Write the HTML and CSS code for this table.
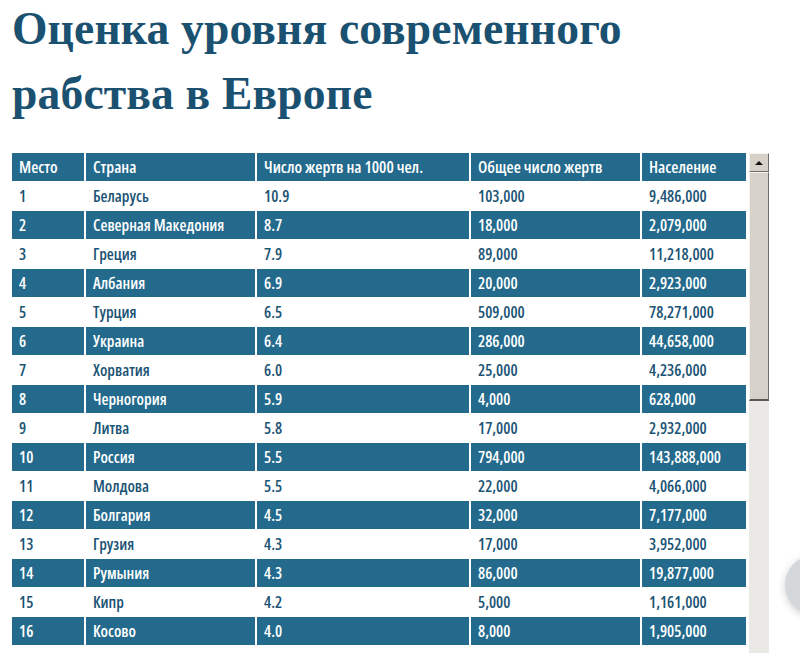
FILE: index.html
```html
<!DOCTYPE html>
<html lang="ru">
<head>
<meta charset="utf-8">
<title>Оценка уровня современного рабства в Европе</title>
<link rel="stylesheet" href="styles.css">
</head>
<body>
<h1 class="title">Оценка уровня современного рабства в Европе</h1>
<div class="frame">
  <table class="data">
    <colgroup><col class="c1"><col class="c2"><col class="c3"><col class="c4"><col class="c5"></colgroup>
    <thead>
      <tr><th>Место</th><th>Страна</th><th>Число жертв на 1000 чел.</th><th>Общее число жертв</th><th>Население</th></tr>
    </thead>
    <tbody>
      <tr><td>1</td><td>Беларусь</td><td>10.9</td><td>103,000</td><td>9,486,000</td></tr>
      <tr class="dark"><td>2</td><td>Северная Македония</td><td>8.7</td><td>18,000</td><td>2,079,000</td></tr>
      <tr><td>3</td><td>Греция</td><td>7.9</td><td>89,000</td><td>11,218,000</td></tr>
      <tr class="dark"><td>4</td><td>Албания</td><td>6.9</td><td>20,000</td><td>2,923,000</td></tr>
      <tr><td>5</td><td>Турция</td><td>6.5</td><td>509,000</td><td>78,271,000</td></tr>
      <tr class="dark"><td>6</td><td>Украина</td><td>6.4</td><td>286,000</td><td>44,658,000</td></tr>
      <tr><td>7</td><td>Хорватия</td><td>6.0</td><td>25,000</td><td>4,236,000</td></tr>
      <tr class="dark"><td>8</td><td>Черногория</td><td>5.9</td><td>4,000</td><td>628,000</td></tr>
      <tr><td>9</td><td>Литва</td><td>5.8</td><td>17,000</td><td>2,932,000</td></tr>
      <tr class="dark"><td>10</td><td>Россия</td><td>5.5</td><td>794,000</td><td>143,888,000</td></tr>
      <tr><td>11</td><td>Молдова</td><td>5.5</td><td>22,000</td><td>4,066,000</td></tr>
      <tr class="dark"><td>12</td><td>Болгария</td><td>4.5</td><td>32,000</td><td>7,177,000</td></tr>
      <tr><td>13</td><td>Грузия</td><td>4.3</td><td>17,000</td><td>3,952,000</td></tr>
      <tr class="dark"><td>14</td><td>Румыния</td><td>4.3</td><td>86,000</td><td>19,877,000</td></tr>
      <tr><td>15</td><td>Кипр</td><td>4.2</td><td>5,000</td><td>1,161,000</td></tr>
      <tr class="dark"><td>16</td><td>Косово</td><td>4.0</td><td>8,000</td><td>1,905,000</td></tr>
    </tbody>
  </table>
  <div class="scrollbar">
    <div class="sb-btn"><span class="sb-arrow"></span></div>
    <div class="sb-thumb"></div>
    <div class="sb-track"></div>
  </div>
</div>
<div class="float-btn"></div>
</body>
</html>
```
FILE: styles.css
```css
html, body {
  margin: 0;
  padding: 0;
  background: #ffffff;
  overflow: hidden;
}
body {
  width: 800px;
  height: 653px;
  position: relative;
  padding-left: 12px;
  box-sizing: border-box;
}
.title {
  margin: -4px 0 0 0;
  font-family: "Liberation Serif", "Times New Roman", serif;
  font-weight: bold;
  font-size: 45.6px;
  line-height: 65px;
  color: #1b5170;
  width: 660px;
  height: 154px;
  letter-spacing: 0.15px;
}
.frame {
  display: flex;
  align-items: flex-start;
  gap: 3px;
  margin-top: 3px;
}
.data {
  table-layout: fixed;
  width: 738px;
  flex: none;
  border-collapse: separate;
  border-spacing: 2px 1.3px;
  margin: -1.3px -2px;
  font-family: "Open Sans", "DejaVu Sans Condensed", sans-serif;
  font-stretch: 75%;
  font-size: 16px;
  font-weight: 600;
  color: #1c5475;
}
.data th, .data td {
  height: 28px;
  padding: 0 0 0 7px;
  text-align: left;
  vertical-align: middle;
  box-sizing: border-box;
  white-space: nowrap;
  overflow: hidden;
}
.data th {
  background: #236a8c;
  color: #ffffff;
  font-weight: 600;
  font-size: 16.4px;
}
.data tr.dark td {
  background: #236a8c;
  color: #ffffff;
}
.c1 { width: 72px; }
.c2 { width: 169px; }
.c3 { width: 212px; }
.c4 { width: 169px; }
.c5 { width: 104px; }
.scrollbar {
  width: 20px;
  height: 500px;
  flex: none;
  display: flex;
  flex-direction: column;
  background: #ebe9e5;
}
.sb-btn {
  height: 19px;
  box-sizing: border-box;
  background: #d6d2ca;
  border-top: 1px solid #f4f3f0;
  border-left: 1px solid #f4f3f0;
  border-right: 1px solid #6f6d69;
  border-bottom: 1px solid #6f6d69;
  display: flex;
  align-items: center;
  justify-content: center;
}
.sb-arrow {
  width: 0;
  height: 0;
  border-left: 4px solid transparent;
  border-right: 4px solid transparent;
  border-bottom: 4px solid #111111;
}
.sb-thumb {
  height: 229px;
  box-sizing: border-box;
  background: #d6d2ca;
  border-top: 1px solid #f4f3f0;
  border-left: 1px solid #f4f3f0;
  border-right: 1px solid #6f6d69;
  border-bottom: 2px solid #5a5855;
}
.sb-track {
  flex: 1;
  background-color: #ebe9e5;
}
.float-btn {
  position: absolute;
  left: 785px;
  top: 555px;
  width: 60px;
  height: 60px;
  border-radius: 50%;
  background: #d5d8db;
  box-shadow: 0 2px 8px rgba(0, 0, 0, 0.18);
}
```
